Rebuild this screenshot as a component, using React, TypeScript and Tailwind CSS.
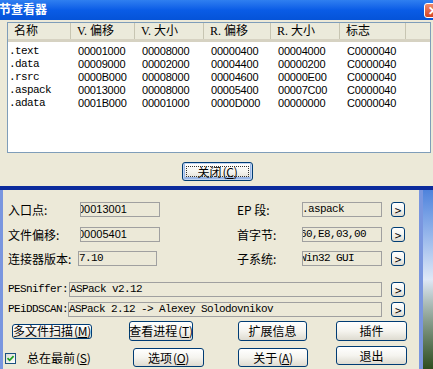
import type { ReactNode } from 'react';

const cjk = "font-['Noto_Sans_CJK_SC',sans-serif]";
const mono = "font-['Liberation_Mono','Noto_Sans_CJK_SC',monospace]";
const sans = "font-['Liberation_Sans','Noto_Sans_CJK_SC',sans-serif]";
const serif = "font-['Liberation_Serif','Noto_Sans_CJK_SC',serif]";

const sections = [
  ['.text', '00001000', '00008000', '00000400', '00004000', 'C0000040'],
  ['.data', '00009000', '00002000', '00004400', '00000200', 'C0000040'],
  ['.rsrc', '0000B000', '00008000', '00004600', '00000E00', 'C0000040'],
  ['.aspack', '00013000', '00008000', '00005400', '00007C00', 'C0000040'],
  ['.adata', '0001B000', '00001000', '0000D000', '00000000', 'C0000040'],
];

const headers = ['名称', 'V. 偏移', 'V. 大小', 'R. 偏移', 'R. 大小', '标志'];
const colWidths = ['w-[63px]', 'w-[64px]', 'w-[69px]', 'w-[67px]', 'w-[69px]', 'w-[66px]'];

function XPButton({ children, className = '' }: { children: ReactNode; className?: string }) {
  return (
    <div
      className={`flex shrink-0 items-center justify-center whitespace-nowrap rounded-[3px] border border-[#003c74] bg-linear-to-b from-white via-[#f5f4ef] to-[#dedbd0] text-[12px] leading-none text-black ${cjk} ${className}`}
    >
      {children}
    </div>
  );
}

function Arrow() {
  return (
    <XPButton className={`ml-[9px] h-[15px] w-[14px] ${mono}`}>
      <span className="text-[12px]">&gt;</span>
    </XPButton>
  );
}

function Box({ children, className = '', shift = '' }: { children?: ReactNode; className?: string; shift?: string }) {
  return (
    <div className={`flex h-[15px] shrink-0 items-center overflow-hidden border border-[#a0a0a0] bg-[#ece9d8] ${className}`}>
      <span className={`whitespace-nowrap ${shift}`}>{children}</span>
    </div>
  );
}

function U({ c }: { c: string }) {
  return (
    <span className="ml-[1px] tracking-[-0.3px]">
      (<span className="underline">{c}</span>)
    </span>
  );
}

export default function App() {
  return (
    <div className="relative h-[369px] w-[433px] overflow-hidden bg-[#ece9d8] text-black">
      {/* section viewer dialog */}
      <div className="flex h-[190px] flex-col">
        <div className="relative h-[20px] bg-linear-to-b from-[#2f7ff0] via-[#0a5ce6] to-[#0553d8]">
          <span className={`absolute left-[-1px] top-[3px] text-[12px] font-bold leading-none text-white ${cjk}`}>
            节查看器
          </span>
          <div className="absolute left-[424px] top-[3px] flex h-[15px] w-[20px] items-center rounded-[3px] border border-white bg-linear-to-b from-[#f08a6c] to-[#d4421f] pl-[3px]">
            <span className="text-[12px] font-bold leading-none text-white">✕</span>
          </div>
        </div>

        <div className="flex flex-1 flex-col">
          <div className="ml-[7px] mt-[2px] h-[131px] w-[424px] border border-[#7f9db9] bg-white">
            <div className="flex h-[19px] border-b-[3px] border-[#d6d2c2] bg-[#ebeadb]">
              {headers.map((h, i) => (
                <div
                  key={h}
                  className={`${colWidths[i]} flex items-center border-r border-[#c7c5b2] pl-[6px] text-[12px] leading-none ${serif}`}
                >
                  {h}
                </div>
              ))}
              <div className="flex-1" />
            </div>
            <div className="pt-[3px]">
              {sections.map((row) => (
                <div key={row[0]} className="flex h-[13px] items-center">
                  {row.map((cell, i) => (
                    <div
                      key={i}
                      className={`${colWidths[i]} whitespace-nowrap leading-none ${
                        i === 0 ? `${mono} pl-[1px] text-[11px] tracking-[-0.6px]` : `${sans} pl-[7px] text-[11px] tracking-[-0.2px]`
                      }`}
                    >
                      {cell}
                    </div>
                  ))}
                </div>
              ))}
            </div>
          </div>
          <div className="mt-[9px] flex">
            <XPButton className="relative ml-[182px] h-[19px] w-[71px] shadow-[inset_0_0_0_1px_#c2d5f2,inset_0_-1px_0_2px_#9ab7e6]">
              <span className="absolute inset-[3px] border border-dotted border-[#333]" />
              关闭<U c="C" />
            </XPButton>
          </div>
        </div>
        <div className="h-[4px] bg-[#0b2b9c]" />
      </div>

      {/* main PEiD window */}
      <div className="flex h-[179px]">
        <div className={`flex w-[423px] flex-col border-l-[3px] border-r-[4px] border-[#7a96df] text-[12px] leading-none ${cjk}`}>
          <div className="mt-[12px] flex h-[15px] items-center">
            <div className="w-[77px] shrink-0 pl-[5px]">入口点:</div>
            <Box className={`w-[80px] ${sans} text-[11px]`} shift="ml-[-3px]">00013001</Box>
            <div className="ml-[77px] w-[65px] shrink-0">EP 段:</div>
            <Box className={`w-[80px] ${mono} text-[11px] tracking-[-0.6px]`} shift="ml-[-1px]">.aspack</Box>
            <Arrow />
          </div>
          <div className="mt-[10px] flex h-[15px] items-center">
            <div className="w-[77px] shrink-0 pl-[5px]">文件偏移:</div>
            <Box className={`w-[80px] ${sans} text-[11px]`} shift="ml-[-3px]">00005401</Box>
            <div className="ml-[77px] w-[65px] shrink-0">首字节:</div>
            <Box className={`w-[80px] ${mono} text-[11px] tracking-[-0.6px]`} shift="ml-[-3px]">60,E8,03,00</Box>
            <Arrow />
          </div>
          <div className="mt-[9px] flex h-[15px] items-center">
            <div className="w-[75px] shrink-0 pl-[5px]">连接器版本:</div>
            <Box className={`w-[79px] ${mono} text-[11px] tracking-[-0.6px]`}>7.10</Box>
            <div className="ml-[80px] w-[65px] shrink-0">子系统:</div>
            <Box className={`w-[80px] ${mono} text-[11px] tracking-[-0.6px]`} shift="ml-[-3px]">Win32 GUI</Box>
            <Arrow />
          </div>

          <div className={`mt-[16px] flex h-[15px] items-center ${mono} text-[11px] tracking-[-0.6px]`}>
            <div className="w-[66px] shrink-0 pl-[5px]">PESniffer:</div>
            <Box className="w-[313px]">ASPack v2.12</Box>
            <Arrow />
          </div>
          <div className={`mt-[5px] flex h-[15px] items-center ${mono} text-[11px] tracking-[-0.6px]`}>
            <div className="w-[65px] shrink-0 pl-[5px]">PEiDDSCAN:</div>
            <Box className="w-[314px]">ASPack 2.12 -&gt; Alexey Solodovnikov</Box>
            <Arrow />
          </div>

          <div className="mt-[4px] flex h-[20px] items-center">
            <XPButton className="ml-[9px] h-[15px] w-[80px]">
              多文件扫描<U c="M" />
            </XPButton>
            <XPButton className="ml-[37px] h-[20px] w-[64px]">
              查看进程<U c="T" />
            </XPButton>
            <XPButton className="ml-[45px] h-[20px] w-[69px]">扩展信息</XPButton>
            <XPButton className="ml-[29px] h-[20px] w-[71px]">插件</XPButton>
          </div>
          <div className="mt-[5px] flex h-[21px] items-start">
            <div className="ml-[2px] mt-[7px] flex h-[11px] w-[11px] shrink-0 items-center justify-center border border-[#1c5180] bg-linear-to-br from-[#dcdcd6] to-white">
              <svg viewBox="0 0 9 9" className="h-[9px] w-[9px]">
                <path d="M1.5 4.2 L3.6 6.3 L7.6 2.2" fill="none" stroke="#21a121" strokeWidth="1.8" />
              </svg>
            </div>
            <div className="ml-[11px] mt-[6px] w-[106px] shrink-0 whitespace-nowrap">
              总在最前<U c="S" />
            </div>
            <XPButton className="mt-[2px] h-[19px] w-[71px]">
              选项<U c="O" />
            </XPButton>
            <XPButton className="ml-[34px] mt-[2px] h-[19px] w-[70px]">
              关于<U c="A" />
            </XPButton>
            <XPButton className="ml-[28px] h-[19px] w-[71px]">退出</XPButton>
          </div>
        </div>
        <div className="flex-1 bg-linear-to-b from-[#4f83dc] via-[#dfe8f6] to-[#2e4d1e]" />
      </div>
    </div>
  );
}
